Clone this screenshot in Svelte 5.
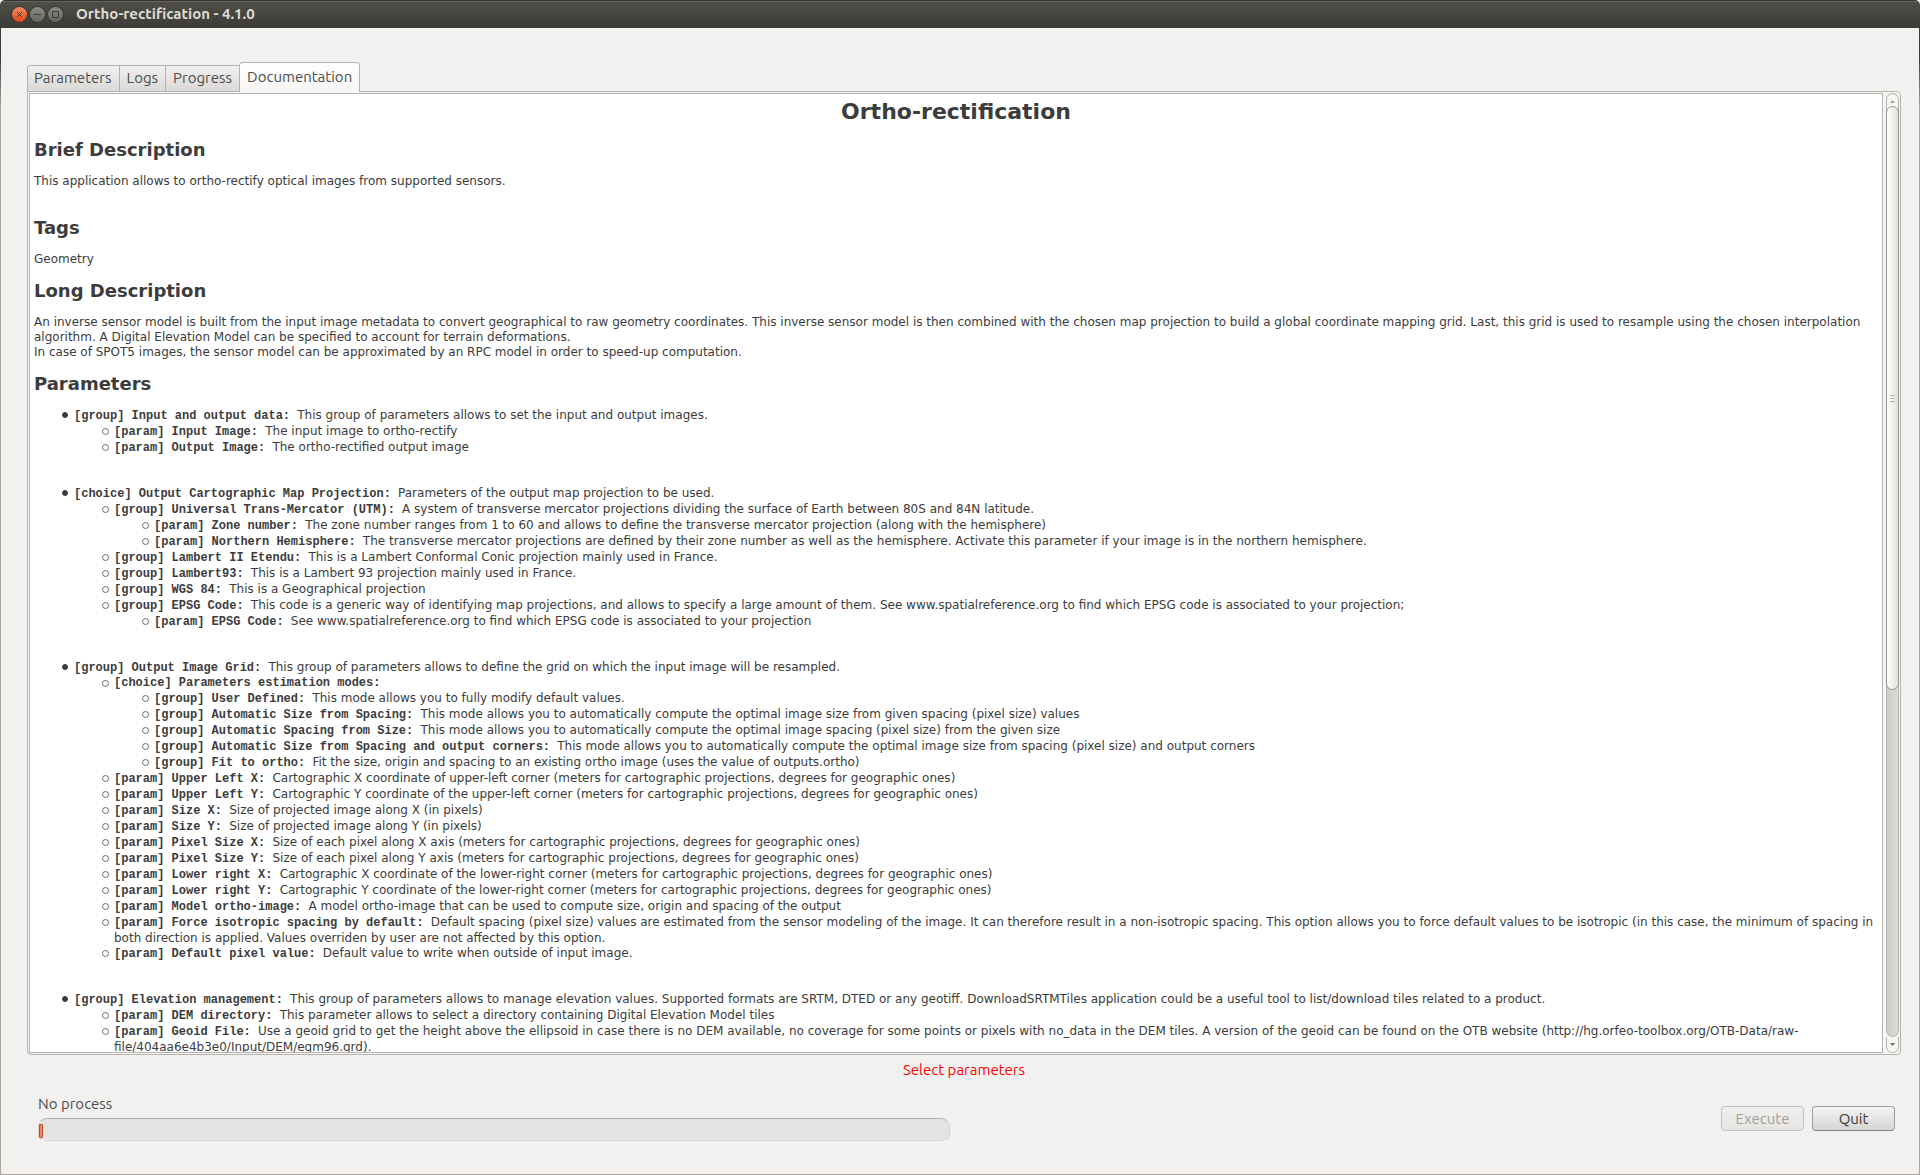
<script lang="ts">
  type Item = { k: string; n: string; d?: string; c?: Item[] };
  const g = (n: string, d = '', c: Item[] = []): Item => ({ k: 'group', n, d, c });
  const p = (n: string, d = ''): Item => ({ k: 'param', n, d, c: [] });
  const ch = (n: string, d = '', c: Item[] = []): Item => ({ k: 'choice', n, d, c });

  const tabs = ['Parameters', 'Logs', 'Progress', 'Documentation'];
  let active = $state('Documentation');

  const items: Item[] = [
    g('Input and output data', 'This group of parameters allows to set the input and output images.', [
      p('Input Image', 'The input image to ortho-rectify'),
      p('Output Image', 'The ortho-rectified output image'),
    ]),
    ch('Output Cartographic Map Projection', 'Parameters of the output map projection to be used.', [
      g('Universal Trans-Mercator (UTM)', 'A system of transverse mercator projections dividing the surface of Earth between 80S and 84N latitude.', [
        p('Zone number', 'The zone number ranges from 1 to 60 and allows to define the transverse mercator projection (along with the hemisphere)'),
        p('Northern Hemisphere', 'The transverse mercator projections are defined by their zone number as well as the hemisphere. Activate this parameter if your image is in the northern hemisphere.'),
      ]),
      g('Lambert II Etendu', 'This is a Lambert Conformal Conic projection mainly used in France.'),
      g('Lambert93', 'This is a Lambert 93 projection mainly used in France.'),
      g('WGS 84', 'This is a Geographical projection'),
      g('EPSG Code', 'This code is a generic way of identifying map projections, and allows to specify a large amount of them. See www.spatialreference.org to find which EPSG code is associated to your projection;', [
        p('EPSG Code', 'See www.spatialreference.org to find which EPSG code is associated to your projection'),
      ]),
    ]),
    g('Output Image Grid', 'This group of parameters allows to define the grid on which the input image will be resampled.', [
      ch('Parameters estimation modes', '', [
        g('User Defined', 'This mode allows you to fully modify default values.'),
        g('Automatic Size from Spacing', 'This mode allows you to automatically compute the optimal image size from given spacing (pixel size) values'),
        g('Automatic Spacing from Size', 'This mode allows you to automatically compute the optimal image spacing (pixel size) from the given size'),
        g('Automatic Size from Spacing and output corners', 'This mode allows you to automatically compute the optimal image size from spacing (pixel size) and output corners'),
        g('Fit to ortho', 'Fit the size, origin and spacing to an existing ortho image (uses the value of outputs.ortho)'),
      ]),
      p('Upper Left X', 'Cartographic X coordinate of upper-left corner (meters for cartographic projections, degrees for geographic ones)'),
      p('Upper Left Y', 'Cartographic Y coordinate of the upper-left corner (meters for cartographic projections, degrees for geographic ones)'),
      p('Size X', 'Size of projected image along X (in pixels)'),
      p('Size Y', 'Size of projected image along Y (in pixels)'),
      p('Pixel Size X', 'Size of each pixel along X axis (meters for cartographic projections, degrees for geographic ones)'),
      p('Pixel Size Y', 'Size of each pixel along Y axis (meters for cartographic projections, degrees for geographic ones)'),
      p('Lower right X', 'Cartographic X coordinate of the lower-right corner (meters for cartographic projections, degrees for geographic ones)'),
      p('Lower right Y', 'Cartographic Y coordinate of the lower-right corner (meters for cartographic projections, degrees for geographic ones)'),
      p('Model ortho-image', 'A model ortho-image that can be used to compute size, origin and spacing of the output'),
      p('Force isotropic spacing by default', 'Default spacing (pixel size) values are estimated from the sensor modeling of the image. It can therefore result in a non-isotropic spacing. This option allows you to force default values to be isotropic (in this case, the minimum of spacing in both direction is applied. Values overriden by user are not affected by this option.'),
      p('Default pixel value', 'Default value to write when outside of input image.'),
    ]),
    g('Elevation management', 'This group of parameters allows to manage elevation values. Supported formats are SRTM, DTED or any geotiff. DownloadSRTMTiles application could be a useful tool to list/download tiles related to a product.', [
      p('DEM directory', 'This parameter allows to select a directory containing Digital Elevation Model tiles'),
      p('Geoid File', 'Use a geoid grid to get the height above the ellipsoid in case there is no DEM available, no coverage for some points or pixels with no_data in the DEM tiles. A version of the geoid can be found on the OTB website (http://hg.orfeo-toolbox.org/OTB-Data/raw-file/404aa6e4b3e0/Input/DEM/egm96.grd).'),
    ]),
  ];
</script>

{#snippet list(rows: Item[], level: number)}
  <ul class={level ? 'sub' : 'top'}>
    {#each rows as r}
      <li>
        <div class="row" class:bare={!r.d}><b>[{r.k}] {r.n}:&nbsp;</b>{r.d}</div>
        {#if r.c && r.c.length}{@render list(r.c, level + 1)}{/if}
      </li>
    {/each}
  </ul>
{/snippet}

<div class="window">
  <header>
    <button class="wb close" aria-label="Close"><svg viewBox="0 0 15 15"><path d="M5 5l5 5M10 5l-5 5" /></svg></button>
    <button class="wb" aria-label="Minimize"><svg viewBox="0 0 15 15"><path d="M4 7.500h7" /></svg></button>
    <button class="wb" aria-label="Maximize"><svg viewBox="0 0 15 15"><path d="M4.500 4.500h6v6h-6z" /></svg></button>
    <span class="title">Ortho-rectification - 4.1.0</span>
  </header>
  <main>
    <div class="tabs" role="tablist">
      {#each tabs as t}
        <button role="tab" aria-selected={active === t} class:on={active === t} onclick={() => (active = t)}>{t}</button>
      {/each}
    </div>
    <section class="pane">
      <article>
        <h1>Ortho-rectification</h1>
        <h2>Brief Description</h2>
        <p class="brief">This application allows to ortho-rectify optical images from supported sensors.</p>
        <h2>Tags</h2>
        <p>Geometry</p>
        <h2>Long Description</h2>
        <p>An inverse sensor model is built from the input image metadata to convert geographical to raw geometry coordinates. This inverse sensor model is then combined with the chosen map projection to build a global coordinate mapping grid. Last, this grid is used to resample using the chosen interpolation algorithm. A Digital Elevation Model can be specified to account for terrain deformations.<br />In case of SPOT5 images, the sensor model can be approximated by an RPC model in order to speed-up computation.</p>
        <h2>Parameters</h2>
        {@render list(items, 0)}
      </article>
      <div class="scroll">
        <button class="up" aria-label="Scroll up"><svg viewBox="0 0 5 3"><path d="M0 3L2.500 0L5 3z" /></svg></button>
        <div class="track"><div class="thumb"><i></i><i></i><i></i></div></div>
        <button class="down" aria-label="Scroll down"><svg viewBox="0 0 5 3"><path d="M0 0L2.500 3L5 0z" /></svg></button>
      </div>
    </section>
    <p class="status">Select parameters</p>
    <footer>
      <div class="prog">
        <span id="proc">No process</span>
        <div class="bar" role="progressbar" aria-labelledby="proc" aria-valuenow="0"><div class="chunk"></div></div>
      </div>
      <div class="actions">
        <button disabled>Execute</button>
        <button>Quit</button>
      </div>
    </footer>
  </main>
</div>

<style>
  :global(body) { margin: 0; background: #fff; }
  * { box-sizing: border-box; }
  button { font: inherit; color: inherit; padding: 0; margin: 0; }
  .window {
    height: 100vh; display: flex; flex-direction: column; overflow: hidden;
    border-radius: 5px 5px 0 0; background: #f2f1f0;
    font-family: Ubuntu, "Noto Sans", sans-serif; font-size: 15px; color: #4c4c4c;
  }
  header {
    flex: none; height: 28px; display: flex; align-items: center; gap: 3px; padding-left: 12px;
    background: linear-gradient(#4f4e48, #3c3b37); border-top: 1px solid #33322e;
    box-shadow: inset 0 1px #66645c;
  }
  .wb {
    width: 15px; height: 15px; border: 0; border-radius: 50%; background: linear-gradient(#8b8a83, #65645d);
    box-shadow: 0 0 0 1px #383733; display: flex;
  }
  .wb svg { width: 15px; height: 15px; fill: none; stroke: #3c3b37; stroke-width: 1; }
  .close { background: linear-gradient(#f58a66, #dd4814); }
  .title { margin-left: 10px; font-weight: 700; line-height: 20px; padding-bottom: 1px; color: #dfdbd2; }
  main {
    flex: 1; min-height: 0; display: flex; flex-direction: column;
    border: 1px solid #aaa59f; border-top: 0; padding: 34px 18px 31px 26px;
    border-image: linear-gradient(#3c3b37 30px, #aaa59f 80px) 1;
  }
  .tabs { flex: none; display: flex; align-items: flex-end; height: 30px; margin-bottom: -1px; z-index: 1; }
  .tabs button {
    height: 27px; padding: 0 7px 2px; border: 1px solid #b6b3ae; border-right-width: 0; line-height: 23px;
    background: linear-gradient(#f1f0ef, #dbd9d7);
  }
  .tabs button:first-child { border-top-left-radius: 4px; padding-left: 6px; }
  .tabs button.on {
    height: 30px; background: linear-gradient(#fff, #f7f6f5); border-right-width: 1px; border-bottom: 0;
    border-radius: 4px 4px 0 0; line-height: 27px;
  }
  .pane {
    flex: 1; min-height: 0; display: flex; gap: 3px; padding: 1px; border: 1px solid #b6b3ae;
    border-radius: 0 4px 4px 4px; background: #f7f6f5;
  }
  article {
    flex: 1; min-width: 0; overflow: hidden; border: 1px solid #b6b3ae; background: #fff; padding: 4px;
    font: 12px/15px "DejaVu Sans", sans-serif; color: #3c3c3c;
  }
  h1 { margin: 0 0 12px; text-align: center; font-size: 22px; line-height: 28px; }
  h2 { margin: 0 0 13px; font-size: 18px; line-height: 23px; }
  p { margin: 0 0 12px; }
  .brief { margin-bottom: 27px; }
  ul { margin: 0; padding: 0; list-style: none; }
  .top > li { padding-left: 40px; margin-bottom: 30px; }
  .sub > li { padding-left: 40px; }
  .row { position: relative; }
  .row b, .row.bare { font-family: "Liberation Mono", monospace; }
  .row::before {
    content: ""; position: absolute; left: -12px; top: 4px; width: 5px; height: 5px;
    border: 1px solid #6c6c6c; border-radius: 50%;
  }
  .top > li > .row::before { width: 4px; height: 4px; background: #3c3c3c; border-color: #3c3c3c; }
  .scroll { flex: none; width: 13px; display: flex; flex-direction: column; }
  .scroll button {
    flex: none; height: 16px; border: 1px solid #b6b3ae; background: #f7f6f5; display: flex; justify-content: center; align-items: center;
  }
  .scroll svg { width: 5px; height: 3px; fill: #6b6b6b; }
  .scroll .up { border-radius: 7px 7px 0 0; border-bottom: 0; }
  .scroll .up svg { fill: #a5a3a0; }
  .scroll .down { border-radius: 0 0 7px 7px; border-top: 0; }
  .track { flex: 1; background: linear-gradient(90deg, #cfcdcb, #dedcda); border: 1px solid #b6b3ae; border-top: 0; border-radius: 0 0 7px 7px; }
  .thumb {
    height: 63%; margin: -3px -1px 0; border: 1px solid #979590; border-radius: 7px; background: linear-gradient(90deg, #fff, #e2e1df);
    display: flex; flex-direction: column; align-items: center; justify-content: center; gap: 2px;
  }
  .thumb i { width: 5px; height: 1px; background: #b6b3ae; }
  .status { flex: none; margin: 5px 0 0; text-align: center; color: #f00; line-height: 20px; }
  footer { flex: none; display: flex; justify-content: space-between; align-items: flex-end; margin: 14px 6px 0 11px; }
  .prog { flex: 0 0 49.1%; line-height: 20px; }
  .bar {
    height: 25px; margin-top: 4px; border: 1px solid #d4d2ce; border-top-color: #b0aeaa; border-bottom-color: #fff; border-radius: 9px;
    background: #e4e3e1; padding: 5px 0;
  }
  .chunk { width: 4px; height: 14px; border: 1px solid #c34f22; background: #f08763; border-radius: 1px; }
  .actions { display: flex; gap: 8px; margin-bottom: 12px; }
  .actions button {
    width: 83px; height: 25px; border: 1px solid #a19f9b; border-bottom-color: #85837f; border-radius: 4px;
    background: linear-gradient(#f3f3f2, #d6d5d4); color: #3c3c3c;
  }
  .actions button:disabled { border-color: #c2c0bd; background: linear-gradient(#f0efee, #e6e5e4); color: #a19f9b; }
</style>
